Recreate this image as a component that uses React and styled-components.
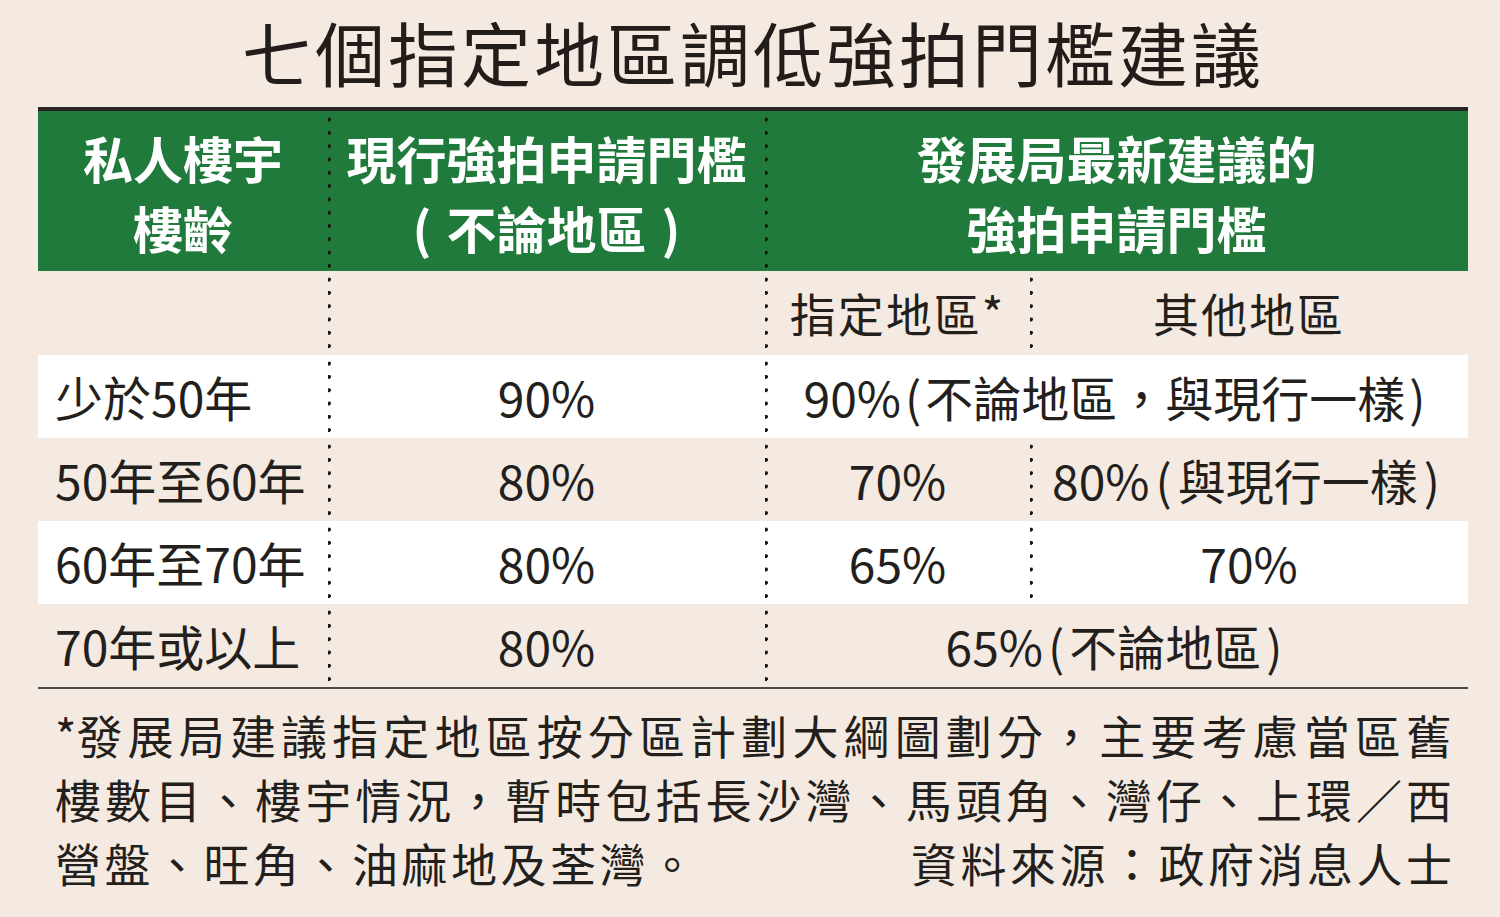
import React from "react";
import styled, { createGlobalStyle } from "styled-components";

const Global = createGlobalStyle`
  html, body { margin: 0; padding: 0; background: #f5eae1; }
  body { font-family: "Noto Sans CJK TC", "Noto Sans", sans-serif; color: #231f1d; }
`;

const COLS = "290px 437px 265px 438px";
const DOT = "radial-gradient(circle at 2px 6.5px, #1a1614 1.7px, transparent 2.2px)";

const Page = styled.div`
  width: 1500px;
  height: 917px;
  padding-left: 38px;
  box-sizing: border-box;
  overflow: hidden;
`;

const Panel = styled.div`
  width: 1430px;
  display: flex;
  flex-direction: column;
`;

const Title = styled.h1`
  margin: 0;
  height: 107px;
  display: flex;
  align-items: center;
  justify-content: center;
  font-size: 70px;
  font-weight: 400;
  letter-spacing: 3px;
  line-height: 1;
  padding-bottom: 4px;
  box-sizing: border-box;
  color: #221d1b;
`;

const TopRule = styled.div`
  height: 4px;
  background: #2a2421;
`;

const Row = styled.div`
  display: grid;
  grid-template-columns: ${COLS};
  height: ${(p) => p.$h}px;
  background: ${(p) => p.$bg};
`;

const Cell = styled.div`
  grid-column: span ${(p) => p.$span || 1};
  display: flex;
  align-items: center;
  justify-content: ${(p) => (p.$left ? "flex-start" : "center")};
  padding-left: ${(p) => (p.$left ? "17px" : "0")};
  padding-bottom: 2px;
  box-sizing: border-box;
  font-size: ${(p) => p.$fs || 48}px;
  white-space: nowrap;
  background-image: ${(p) => (p.$dot ? DOT : "none")};
  background-repeat: repeat-y;
  background-size: 5px 13.3px;
  background-position: -1px 2px;
`;

const HeadCell = styled(Cell)`
  flex-direction: column;
  color: #ffffff;
  font-weight: 700;
  font-size: 50px;
  line-height: 70px;
  padding-bottom: 0;
  padding-top: 1px;
`;

const Paren = styled.span`
  margin: 0 ${(p) => p.$m || 5}px;
`;

const BottomRule = styled.div`
  height: 2px;
  background: #4f4743;
`;

const Notes = styled.div`
  padding: 13px 16px 0 17px;
  font-size: 46px;
  line-height: 64px;
`;

const JustLine = styled.div`
  text-align: justify;
  text-align-last: justify;
  text-justify: inter-character;
  white-space: nowrap;
`;

const Keep = styled.span`
  display: inline-block;
  letter-spacing: 0;
`;

const SplitLine = styled.div`
  display: flex;
  justify-content: space-between;
  letter-spacing: 3.5px;
  white-space: nowrap;
`;

const Source = styled.span`
  margin-right: -3.5px;
`;

export default function App() {
  return (
    <Page>
      <Global />
      <Panel>
        <Title>七個指定地區調低強拍門檻建議</Title>
        <TopRule />
        <Row $h={160} $bg="#1f7a3b">
          <HeadCell>
            <span>私人樓宇</span>
            <span>樓齡</span>
          </HeadCell>
          <HeadCell $dot>
            <span>現行強拍申請門檻</span>
            <span>
              <Paren $m={15}>(</Paren>不論地區<Paren $m={15}>)</Paren>
            </span>
          </HeadCell>
          <HeadCell $dot $span={2}>
            <span>發展局最新建議的</span>
            <span>強拍申請門檻</span>
          </HeadCell>
        </Row>
        <Row $h={84} $bg="#f5eae1">
          <Cell />
          <Cell $dot />
          <Cell $dot $fs={46}>
            <span style={{ letterSpacing: "2px" }}>指定地區*</span>
          </Cell>
          <Cell $dot $fs={46}>
            <span style={{ letterSpacing: "2px" }}>其他地區</span>
          </Cell>
        </Row>
        <Row $h={83} $bg="#ffffff">
          <Cell $left>少於50年</Cell>
          <Cell $dot>90%</Cell>
          <Cell $dot $span={2}>
            90%<Paren $m={4}>(</Paren>不論地區，與現行一樣<Paren $m={4}>)</Paren>
          </Cell>
        </Row>
        <Row $h={83} $bg="#f5eae1">
          <Cell $left>50年至60年</Cell>
          <Cell $dot>80%</Cell>
          <Cell $dot>70%</Cell>
          <Cell $dot>
            80%<Paren $m={6}>(</Paren>與現行一樣<Paren $m={6}>)</Paren>
          </Cell>
        </Row>
        <Row $h={83} $bg="#ffffff">
          <Cell $left>60年至70年</Cell>
          <Cell $dot>80%</Cell>
          <Cell $dot>65%</Cell>
          <Cell $dot>70%</Cell>
        </Row>
        <Row $h={83} $bg="#f5eae1">
          <Cell $left>70年或以上</Cell>
          <Cell $dot>80%</Cell>
          <Cell $dot $span={2}>
            65%<Paren $m={5}>(</Paren>不論地區<Paren $m={5}>)</Paren>
          </Cell>
        </Row>
        <BottomRule />
        <Notes>
          <JustLine>
            <Keep>*發</Keep>展局建議指定地區按分區計劃大綱圖劃分，主要考慮當區舊
          </JustLine>
          <JustLine>樓數目、樓宇情況，暫時包括長沙灣、馬頭角、灣仔、上環／西</JustLine>
          <SplitLine>
            <span>營盤、旺角、油麻地及荃灣。</span>
            <Source>資料來源：政府消息人士</Source>
          </SplitLine>
        </Notes>
      </Panel>
    </Page>
  );
}
